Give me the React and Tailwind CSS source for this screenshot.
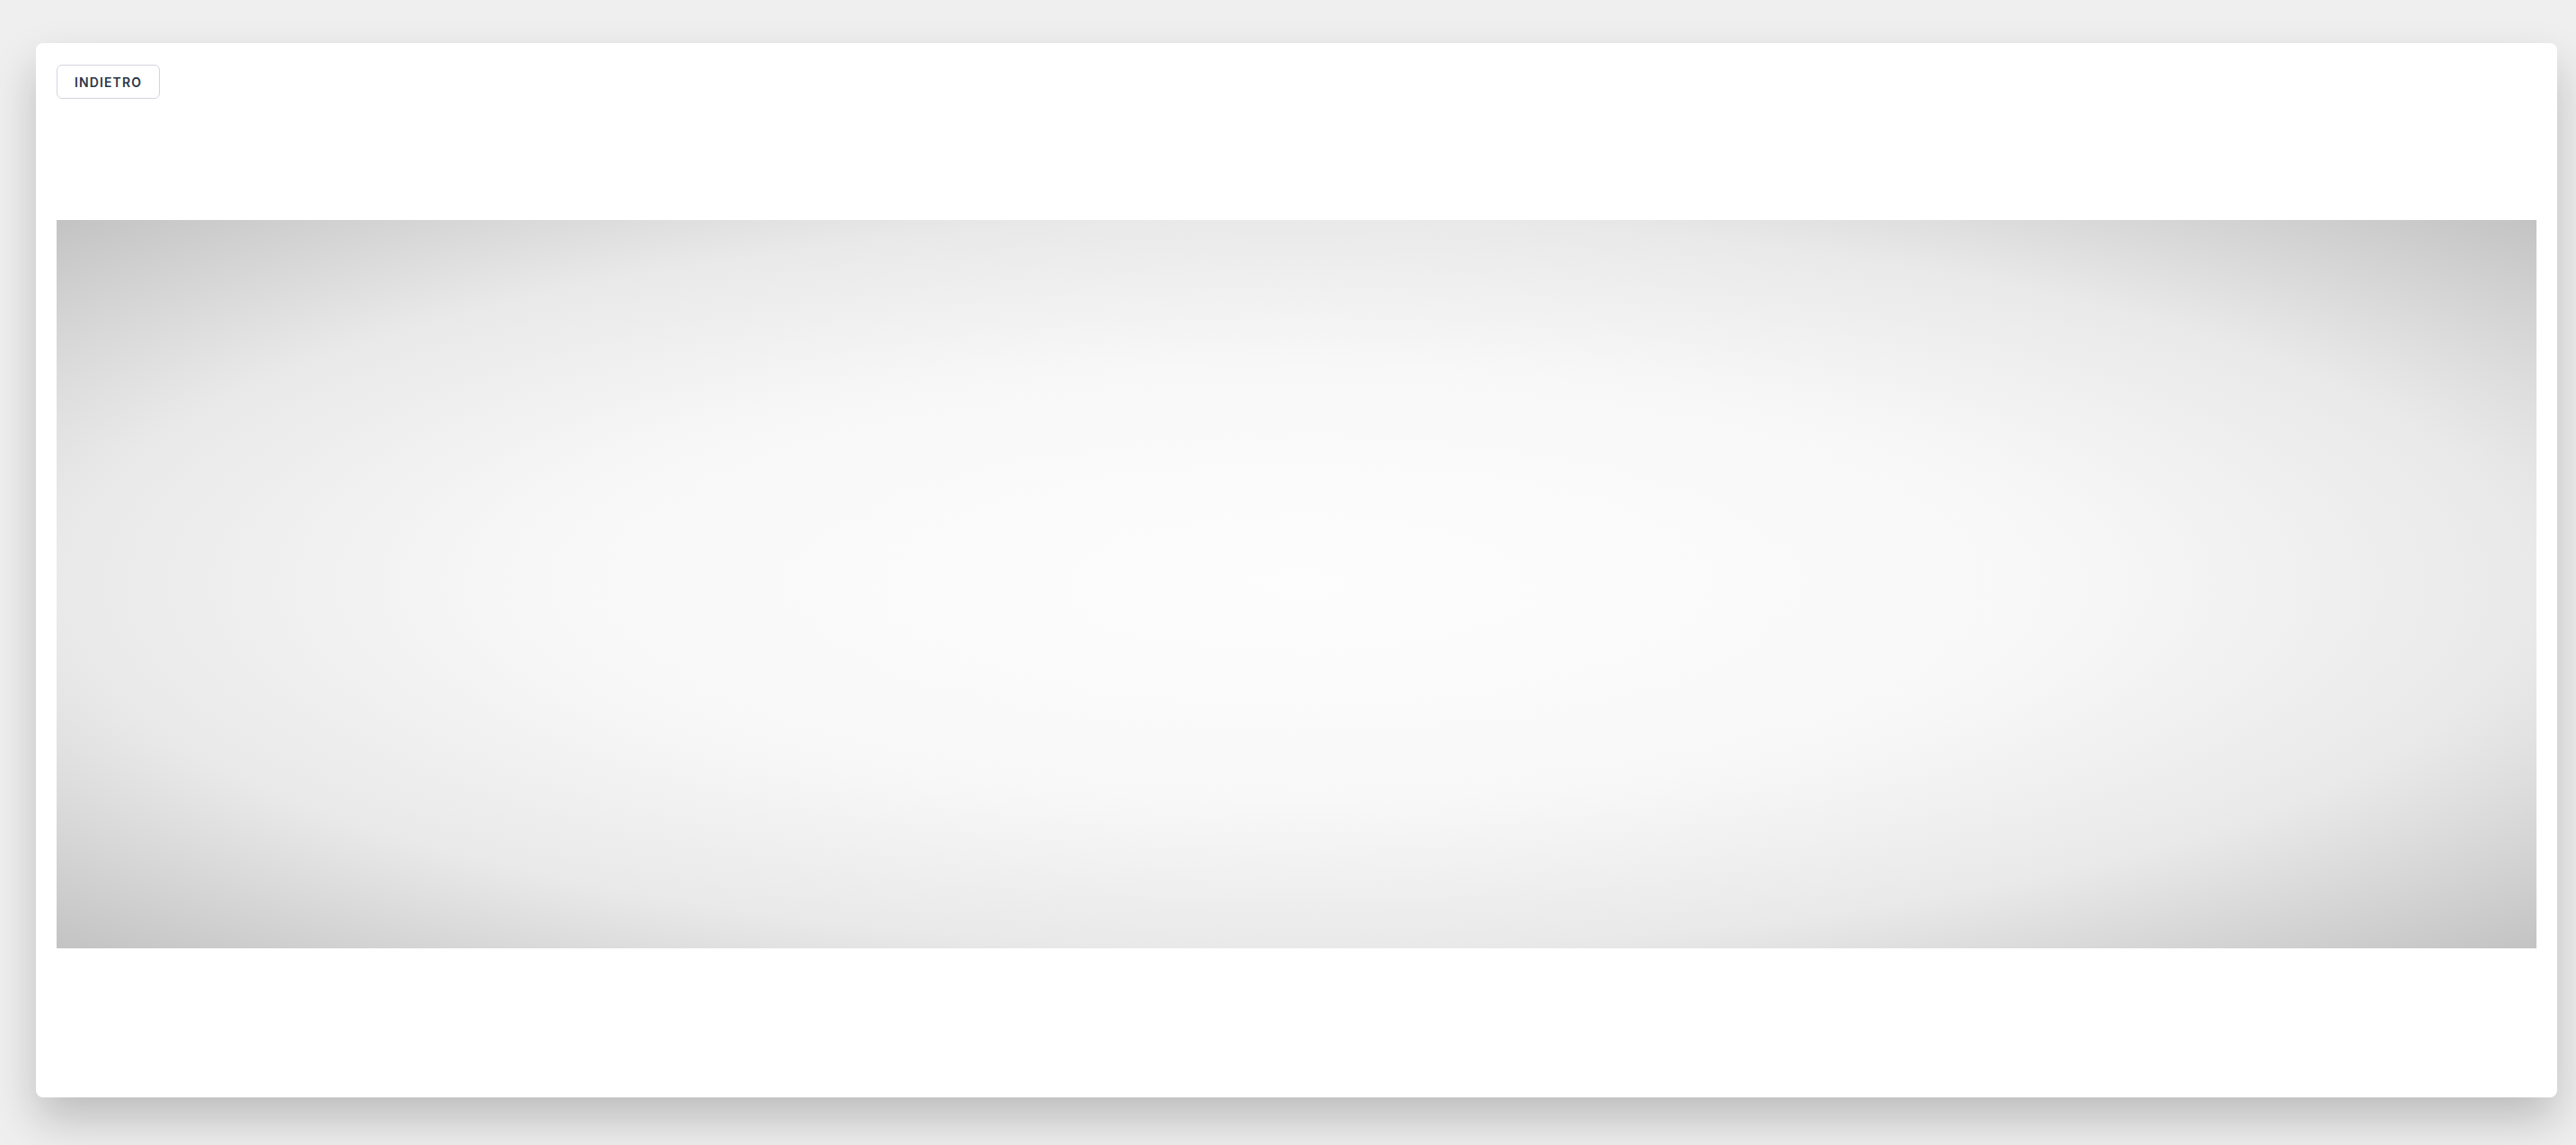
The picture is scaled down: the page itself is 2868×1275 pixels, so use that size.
export default function App() {
  return (
    <div className="min-h-screen bg-[#efefef] pt-[48px] pl-[40px] pr-[21px] pb-[53px]" style={{ fontFamily: 'Inter, "Noto Sans", sans-serif' }}>
      <div className="bg-white rounded-[8px] shadow-[0_25px_50px_rgba(0,0,0,0.21)] px-[23px] pt-[24px] pb-[166px]">
        <div className="flex">
          <button className="h-[38px] w-[115px] rounded-[6px] border border-[#d3d5e0] bg-white text-[14px] font-semibold tracking-[0.08em] text-[#2a3547] flex items-center justify-center">
            INDIETRO
          </button>
        </div>
        <div className="mt-[135px] h-[811px] w-full bg-[radial-gradient(ellipse_farthest-corner_at_center,#fdfdfd_0%,#f8f8f8_42%,#e9e9e9_71%,#c3c3c3_100%)]" />
      </div>
    </div>
  );
}
